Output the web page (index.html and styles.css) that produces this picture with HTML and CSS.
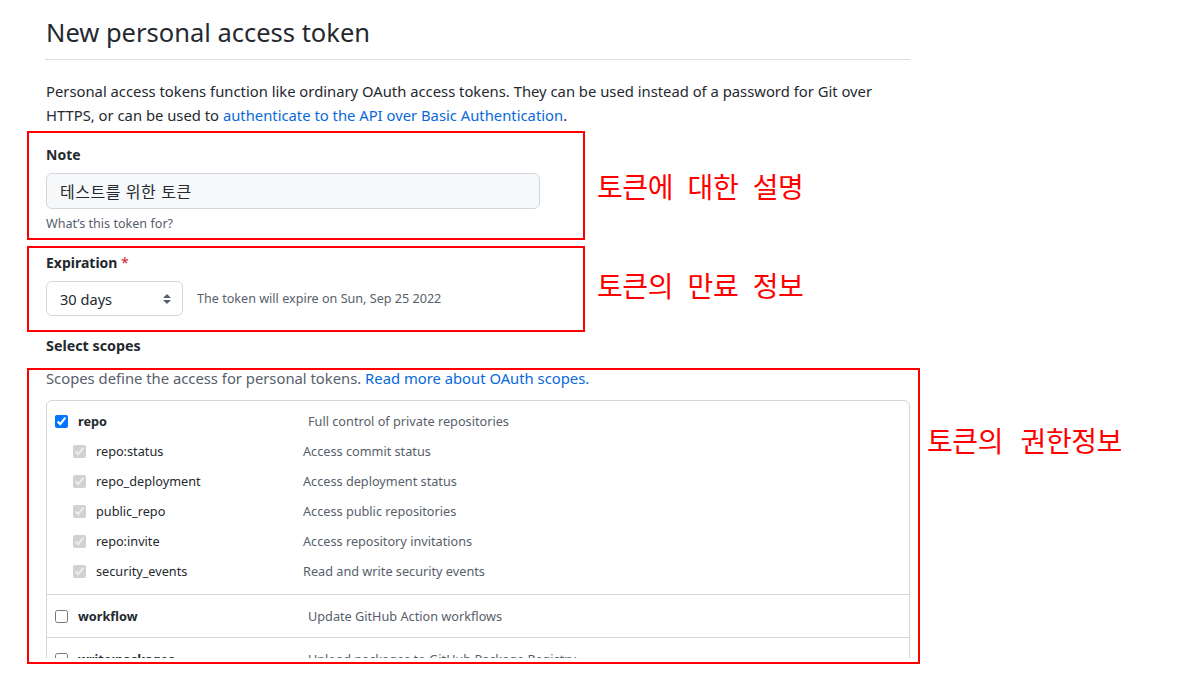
FILE: index.html
```html
<!DOCTYPE html>
<html lang="ko">
<head>
<meta charset="utf-8">
<title>New personal access token</title>
<link rel="stylesheet" href="styles.css">
</head>
<body>
<div class="page">
  <div class="subhead">
    <h2 class="subhead-heading">New personal access token</h2>
  </div>

  <p class="intro">Personal access tokens function like ordinary OAuth access tokens. They can be used instead of a password for Git over HTTPS, or can be used to <a class="link" href="#">authenticate to the API over Basic Authentication</a>.</p>

  <div class="anno-row row-note">
    <div class="mark mark-note">
      <label class="field-label">Note</label>
      <div class="text-input">테스트를 위한 토큰</div>
      <p class="hint note-hint">What’s this token for?</p>
    </div>
    <span class="anno anno-wide anno-note">토큰에 대한 설명</span>
  </div>

  <div class="anno-row row-expire">
    <div class="mark mark-expire">
      <label class="field-label">Expiration <span class="required">*</span></label>
      <div class="expire-row">
        <div class="select">
          <span>30 days</span>
          <svg class="select-arrows" width="16" height="16" viewBox="0 0 16 16"><path fill="#57606a" d="M4.427 9.427l3.396 3.396a.25.25 0 00.354 0l3.396-3.396A.25.25 0 0011.396 9H4.604a.25.25 0 00-.177.427zM4.427 6.573l3.396-3.396a.25.25 0 01.354 0l3.396 3.396A.25.25 0 0111.396 7H4.604a.25.25 0 01-.177-.427z"/></svg>
        </div>
        <span class="hint">The token will expire on Sun, Sep 25 2022</span>
      </div>
    </div>
    <span class="anno anno-wide anno-expire">토큰의 만료 정보</span>
  </div>

  <h3 class="section-label">Select scopes</h3>

  <div class="anno-row row-scopes">
    <div class="mark mark-scopes">
      <div class="scopes-clip">
        <p class="scopes-lead">Scopes define the access for personal tokens. <a class="link" href="#">Read more about OAuth scopes.</a></p>
        <div class="scopes">
          <div class="scope-group group-repo">
            <label class="scope-row top"><input type="checkbox" checked><span class="scope-name strong">repo</span><span class="scope-desc">Full control of private repositories</span></label>
            <label class="scope-row sub"><input type="checkbox" checked disabled><span class="scope-name">repo:status</span><span class="scope-desc">Access commit status</span></label>
            <label class="scope-row sub"><input type="checkbox" checked disabled><span class="scope-name">repo_deployment</span><span class="scope-desc">Access deployment status</span></label>
            <label class="scope-row sub"><input type="checkbox" checked disabled><span class="scope-name">public_repo</span><span class="scope-desc">Access public repositories</span></label>
            <label class="scope-row sub"><input type="checkbox" checked disabled><span class="scope-name">repo:invite</span><span class="scope-desc">Access repository invitations</span></label>
            <label class="scope-row sub"><input type="checkbox" checked disabled><span class="scope-name">security_events</span><span class="scope-desc">Read and write security events</span></label>
          </div>
          <div class="scope-group">
            <label class="scope-row top"><input type="checkbox"><span class="scope-name strong">workflow</span><span class="scope-desc">Update GitHub Action workflows</span></label>
          </div>
          <div class="scope-group">
            <label class="scope-row top"><input type="checkbox"><span class="scope-name strong">write:packages</span><span class="scope-desc">Upload packages to GitHub Package Registry</span></label>
          </div>
        </div>
      </div>
    </div>
    <span class="anno anno-scopes">토큰의 권한정보</span>
  </div>
</div>
</body>
</html>
```

FILE: styles.css
```css
* { box-sizing: border-box; }

body {
  margin: 0;
  background: #ffffff;
  color: #24292f;
  font-family: "Noto Sans", "Noto Sans CJK KR", sans-serif;
  font-size: 14px;
}

.page {
  width: 910px;
  padding-left: 46px;
}

.subhead {
  border-bottom: 1px solid #d8dee4;
  padding-top: 16px;
  padding-bottom: 11px;
  margin-left: -1px;
}

.subhead-heading {
  margin: 0 0 0 1px;
  font-size: 25.5px;
  font-weight: 400;
  line-height: 32px;
}

.intro {
  margin: 19px 0 0;
  font-size: 14.8px;
  line-height: 24px;
  width: 864px;
}

.link {
  color: #0969da;
  text-decoration: none;
}

.anno-row {
  display: flex;
  margin-left: -19px;
}

.row-note { margin-top: 4px; align-items: center; }
.row-expire { margin-top: 6px; align-items: center; }
.row-scopes { margin-top: 12px; align-items: flex-start; }

.mark {
  border: 2px solid #ff0000;
  padding-left: 17px;
}

.mark-note {
  width: 558px;
  padding-top: 12px;
  padding-bottom: 5px;
}

.mark-expire {
  width: 558px;
  padding-top: 5px;
  padding-bottom: 14px;
}

.mark-scopes {
  width: 893px;
  padding: 0 8px 4px 17px;
}

.anno {
  font-family: "Noto Sans CJK KR", sans-serif;
  color: #ff0000;
  font-size: 28px;
  line-height: 32px;
  letter-spacing: -0.4px;
  word-spacing: 10px;
  white-space: nowrap;
}

.anno-wide { word-spacing: 7px; }

.anno-note { margin-left: 12px; }
.anno-expire { margin-left: 12px; margin-bottom: 8px; }
.anno-scopes { margin-left: 7px; margin-top: 56px; }

.field-label {
  display: block;
  font-weight: 700;
  font-size: 14px;
  line-height: 20px;
}

.required { color: #cf222e; font-weight: 400; }

.text-input {
  margin-top: 8px;
  width: 494px;
  height: 36px;
  border: 1px solid #d0d7de;
  border-radius: 6px;
  background: #f6f8fa;
  padding: 0 13px;
  display: flex;
  align-items: center;
  font-family: "Noto Sans CJK KR", sans-serif;
  font-size: 16px;
  letter-spacing: 0.5px;
  color: #24292f;
}

.hint {
  color: #57606a;
  font-size: 12.6px;
  line-height: 18px;
}

.note-hint {
  margin: 6px 0 0;
}

.expire-row {
  margin-top: 8px;
  display: flex;
  align-items: center;
  gap: 14px;
}

.select {
  width: 137px;
  height: 35px;
  border: 1px solid #d0d7de;
  border-radius: 6px;
  background: #ffffff;
  padding: 0 7px 0 13px;
  display: flex;
  align-items: center;
  justify-content: space-between;
  font-size: 14.6px;
}

.section-label {
  margin: 4px 0 0;
  font-size: 14.3px;
  font-weight: 700;
  line-height: 20px;
}

.scopes-clip {
  height: 288px;
  overflow: hidden;
}

.scopes-lead {
  margin: 0;
  font-size: 14.8px;
  line-height: 16px;
  color: #57606a;
}

.scopes {
  margin-top: 14px;
  width: 864px;
  border: 1px solid #d0d7de;
  border-radius: 6px;
}

.scope-group {
  padding: 6px 0;
}

.scope-group + .scope-group {
  border-top: 1px solid #d0d7de;
}

.group-repo {
  padding: 5px 0 8px;
}

.scope-row {
  display: flex;
  align-items: center;
  height: 30px;
  font-size: 12.7px;
}

.scope-row input {
  margin: 0 10px 0 0;
  width: 13px;
  height: 13px;
  flex: none;
}

.scope-row.top { padding-left: 8px; }
.scope-row.sub { padding-left: 26px; }

.scope-name { flex: none; }
.top .scope-name { width: 230px; }
.sub .scope-name { width: 207px; }

.strong { font-weight: 700; }

.scope-desc {
  color: #57606a;
}
```
